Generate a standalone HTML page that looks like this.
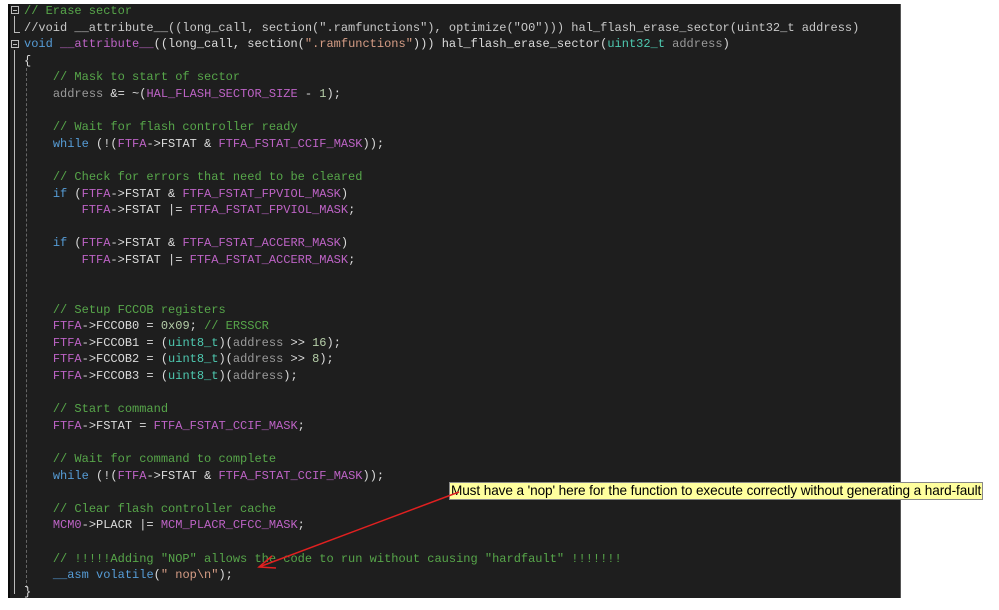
<!DOCTYPE html><html><head><style>
body{margin:0;width:999px;height:610px;background:#fff;position:relative;overflow:hidden}
#p{position:absolute;left:8px;top:4px;width:893px;height:594px;background:#1e1e1e;border-left:2px solid #0a0a0a;border-right:1px solid #555;box-sizing:border-box}
pre{position:absolute;left:24px;top:3px;margin:0;font:12px/16.6px "Liberation Mono",monospace;color:#dcdcdc;white-space:pre}
.c{color:#57a64a}.k{color:#569cd6}.m{color:#bd63c5}.g{color:#9a9a9a}.n{color:#b5cea8}.s{color:#d69d85}.t{color:#4ec9b0}.w{color:#c8c8c8}
.dl{position:absolute;left:26px;top:68px;height:520px;border-left:1px dashed #666}
.fold{position:absolute;left:11px;width:8px;height:8px;border:1px solid #bbb;box-sizing:border-box}
.fold:after{content:"";position:absolute;left:1px;top:3px;width:4px;height:1px;background:#bbb}
#note{position:absolute;left:449px;top:482px;height:16px;padding:0 1px;background:#ffff9e;border:1px solid #888;font:13.6px/16px "Liberation Sans",sans-serif;letter-spacing:-0.1px;color:#000;white-space:nowrap}
</style></head><body>
<div id="p"></div>
<div class="fold" style="top:6px"></div>
<div class="fold" style="top:40px"></div>
<div style="position:absolute;left:14px;top:16px;width:5px;height:16px;border-left:1px solid #bbb;border-bottom:1px solid #bbb"></div>
<div style="position:absolute;left:14px;top:50px;height:544px;border-left:1px solid #bbb"></div>
<div class="dl"></div>
<pre><span class="c">// Erase sector</span>
<span class="w">//void __attribute__((long_call, section(".ramfunctions"), optimize("O0"))) hal_flash_erase_sector(uint32_t address)</span>
<span class="k">void</span> <span class="m">__attribute__</span>((long_call, section(<span class="s">".ramfunctions"</span>))) hal_flash_erase_sector(<span class="t">uint32_t</span> <span class="g">address</span>)
{
    <span class="c">// Mask to start of sector</span>
    <span class="g">address</span> &amp;= ~(<span class="m">HAL_FLASH_SECTOR_SIZE</span> - <span class="n">1</span>);

    <span class="c">// Wait for flash controller ready</span>
    <span class="k">while</span> (!(<span class="m">FTFA</span>-&gt;FSTAT &amp; <span class="m">FTFA_FSTAT_CCIF_MASK</span>));

    <span class="c">// Check for errors that need to be cleared</span>
    <span class="k">if</span> (<span class="m">FTFA</span>-&gt;FSTAT &amp; <span class="m">FTFA_FSTAT_FPVIOL_MASK</span>)
        <span class="m">FTFA</span>-&gt;FSTAT |= <span class="m">FTFA_FSTAT_FPVIOL_MASK</span>;

    <span class="k">if</span> (<span class="m">FTFA</span>-&gt;FSTAT &amp; <span class="m">FTFA_FSTAT_ACCERR_MASK</span>)
        <span class="m">FTFA</span>-&gt;FSTAT |= <span class="m">FTFA_FSTAT_ACCERR_MASK</span>;


    <span class="c">// Setup FCCOB registers</span>
    <span class="m">FTFA</span>-&gt;FCCOB0 = <span class="n">0x09</span>; <span class="c">// ERSSCR</span>
    <span class="m">FTFA</span>-&gt;FCCOB1 = (<span class="t">uint8_t</span>)(<span class="g">address</span> &gt;&gt; <span class="n">16</span>);
    <span class="m">FTFA</span>-&gt;FCCOB2 = (<span class="t">uint8_t</span>)(<span class="g">address</span> &gt;&gt; <span class="n">8</span>);
    <span class="m">FTFA</span>-&gt;FCCOB3 = (<span class="t">uint8_t</span>)(<span class="g">address</span>);

    <span class="c">// Start command</span>
    <span class="m">FTFA</span>-&gt;FSTAT = <span class="m">FTFA_FSTAT_CCIF_MASK</span>;

    <span class="c">// Wait for command to complete</span>
    <span class="k">while</span> (!(<span class="m">FTFA</span>-&gt;FSTAT &amp; <span class="m">FTFA_FSTAT_CCIF_MASK</span>));

    <span class="c">// Clear flash controller cache</span>
    <span class="m">MCM0</span>-&gt;PLACR |= <span class="m">MCM_PLACR_CFCC_MASK</span>;

    <span class="c">// !!!!!Adding "NOP" allows the code to run without causing "hardfault" !!!!!!!</span>
    <span class="k">__asm</span> <span class="k">volatile</span>(<span class="s">" nop\n"</span>);
}</pre>
<div id="note">Must have a 'nop' here for the function to execute correctly without generating a hard-fault</div>
<svg style="position:absolute;left:0;top:0" width="999" height="610"><line x1="459" y1="492" x2="259" y2="567" stroke="#e02020" stroke-width="1.5"/><path d="M272 556 L259 567 L276 568" fill="none" stroke="#e02020" stroke-width="1.5"/></svg>
</body></html>
